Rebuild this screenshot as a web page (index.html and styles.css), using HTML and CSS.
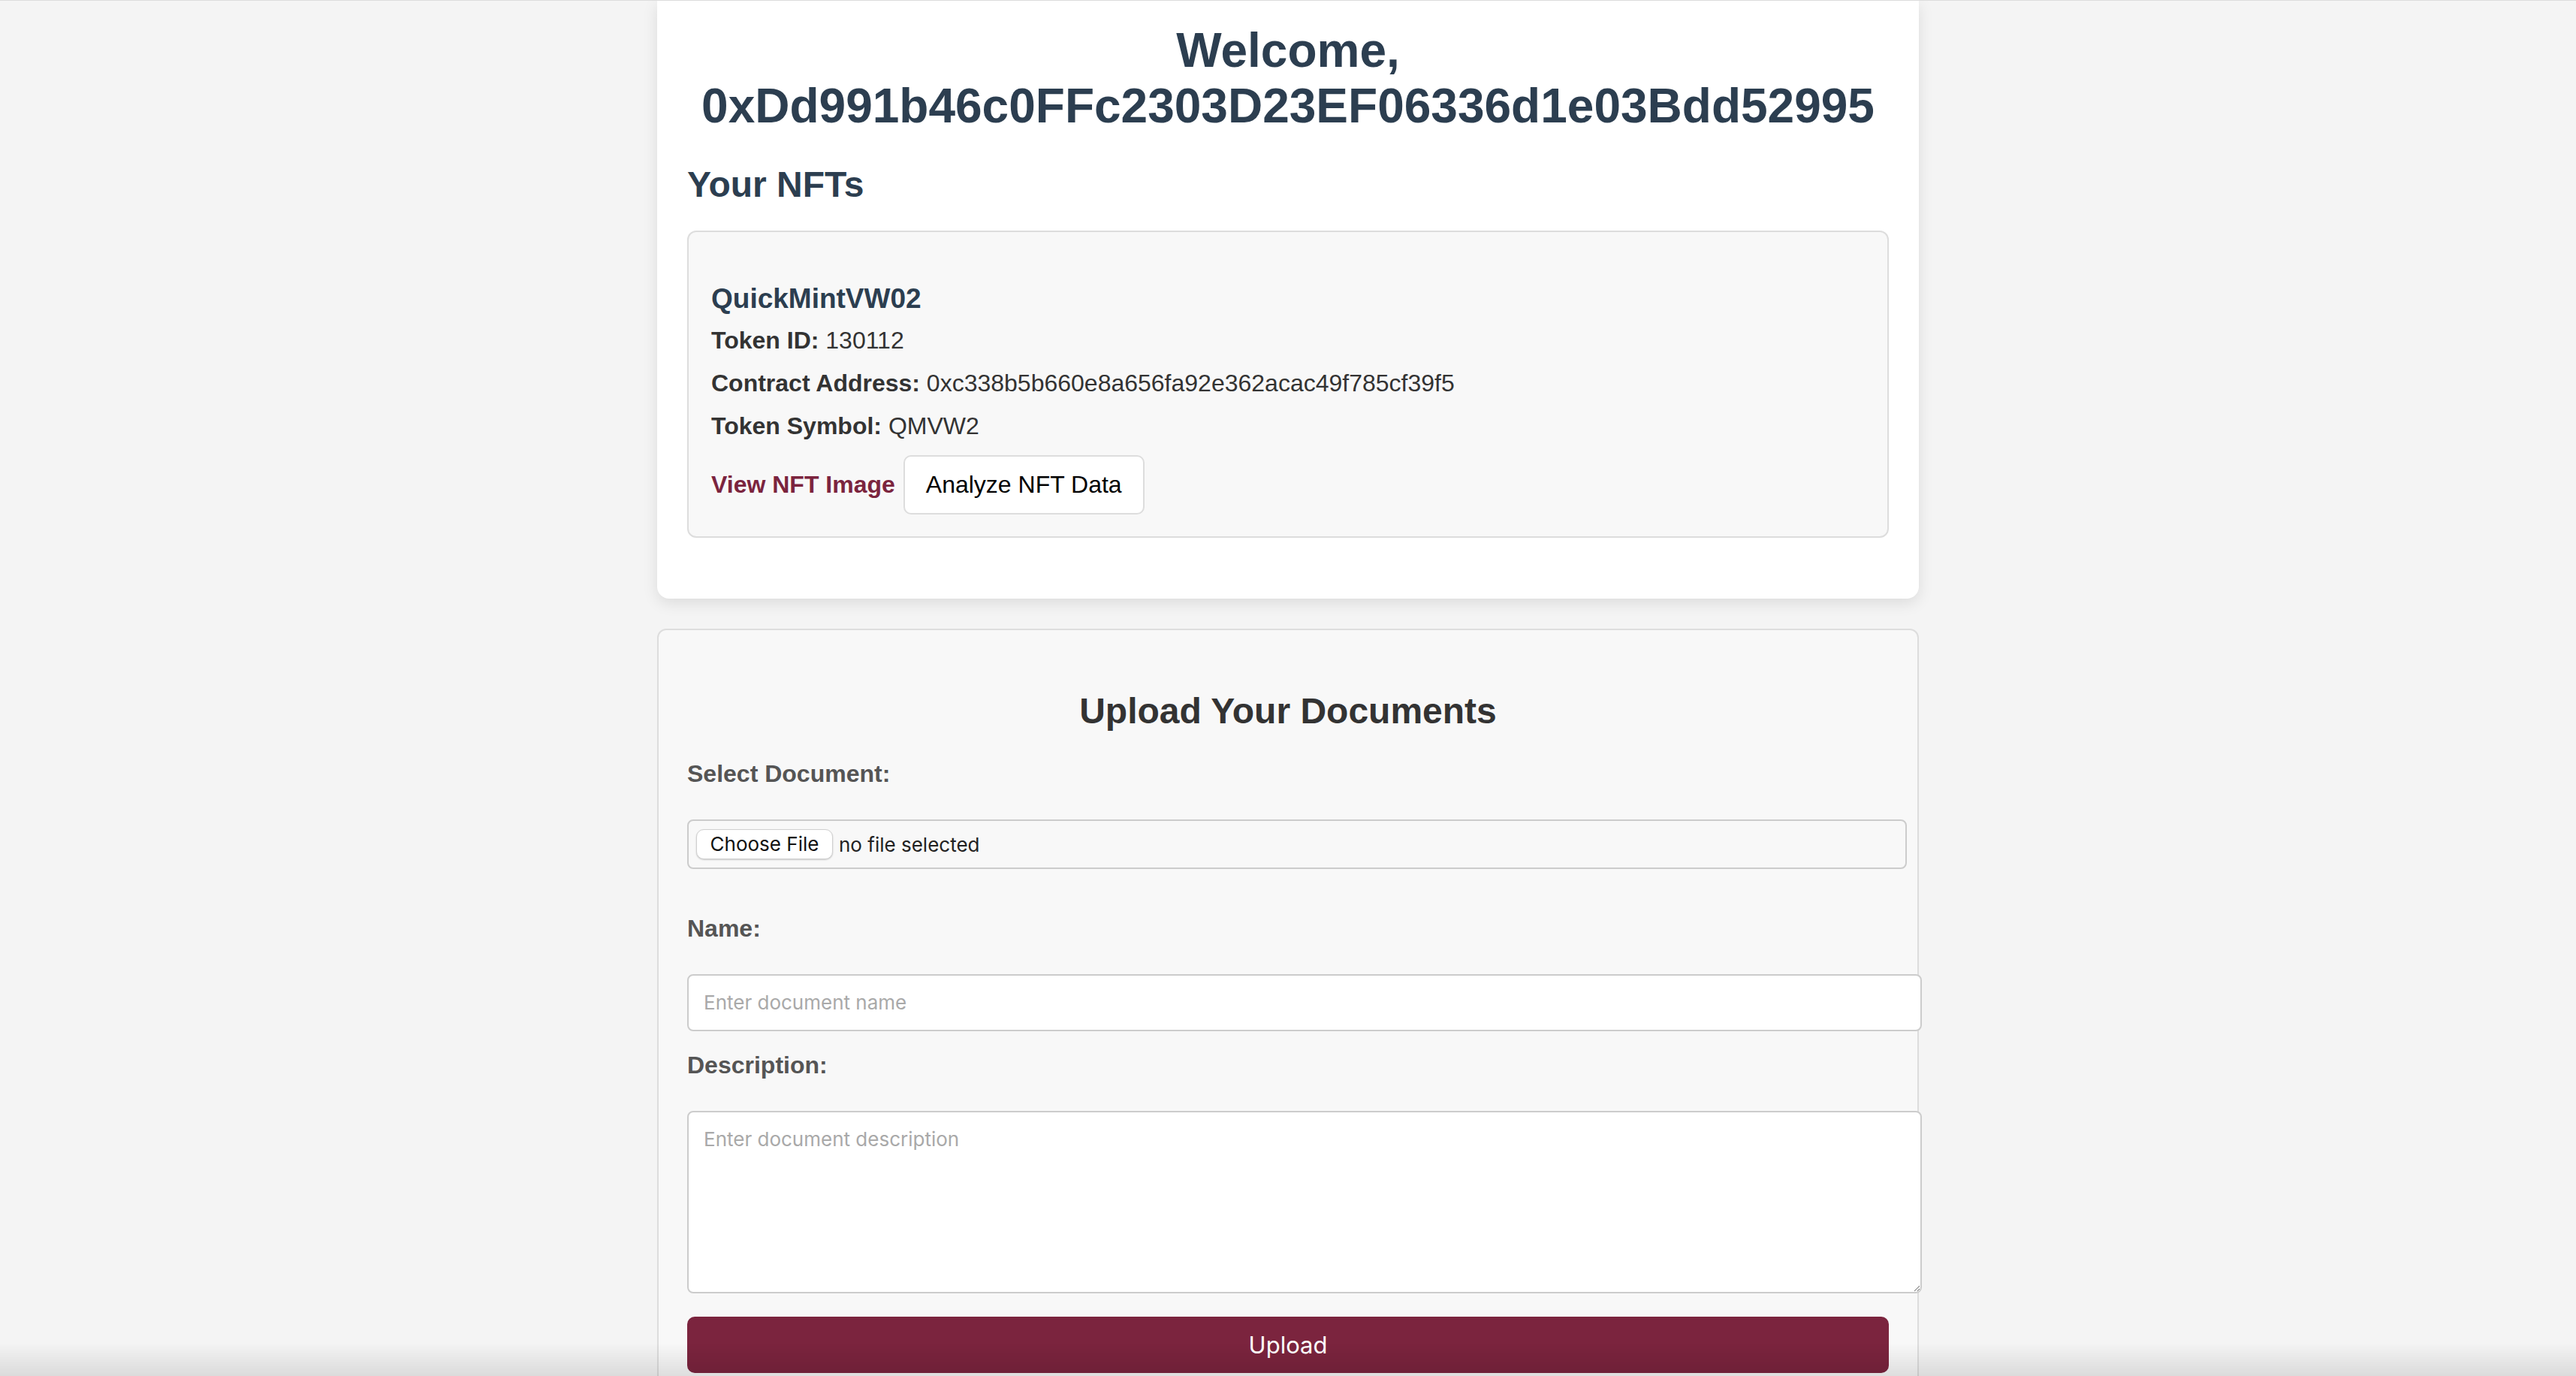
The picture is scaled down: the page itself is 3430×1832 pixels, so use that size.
FILE: index.html
```html
<!DOCTYPE html>
<html lang="en">
<head>
    <meta charset="UTF-8">
    <meta name="viewport" content="width=device-width, initial-scale=1.0">
    <title>Dashboard</title>
    <link rel="stylesheet" href="styles.css">
</head>
<body>
    <div class="container">
        <div class="dashboard">
            <h1>Welcome,<br>0xDd991b46c0FFc2303D23EF06336d1e03Bdd52995</h1>
            <h2>Your NFTs</h2>
            <div class="nft-card">
                <h3>QuickMintVW02</h3>
                <p><strong>Token ID:</strong> 130112</p>
                <p><strong>Contract Address:</strong> 0xc338b5b660e8a656fa92e362acac49f785cf39f5</p>
                <p><strong>Token Symbol:</strong> QMVW2</p>
                <div class="actions">
                    <a class="view-link" href="#">View NFT Image</a>
                    <button class="analyze-btn">Analyze NFT Data</button>
                </div>
            </div>
        </div>

        <div class="upload-card">
            <h2>Upload Your Documents</h2>
            <form>
                <label for="document">Select Document:</label>
                <label class="file-box">
                    <span class="choose-btn">Choose File</span>
                    <span class="file-name">no file selected</span>
                    <input type="file" id="document" class="file-hidden">
                </label>

                <label for="name">Name:</label>
                <input type="text" id="name" class="text-input" placeholder="Enter document name">

                <label for="description">Description:</label>
                <textarea id="description" class="text-area" placeholder="Enter document description"></textarea>

                <button type="submit" class="upload-btn">Upload</button>
            </form>
        </div>
    </div>
    <div class="window-shade"></div>
</body>
</html>
```

FILE: styles.css
```css
body {
    margin: 0;
    background-color: #f4f4f4;
    border-top: 1px solid #dcdcdc;
    font-family: "Liberation Sans", Arial, sans-serif;
    color: #333;
}
.container {
    width: 1680px;
    margin: 0 auto;
}
.dashboard {
    background-color: #fff;
    padding: 29px 40px 40px;
    border-radius: 0 0 16px 16px;
    box-shadow: 0 6px 20px rgba(0, 0, 0, 0.1);
}
.dashboard h1 {
    margin: 0;
    font-size: 64px;
    line-height: 74px;
    text-align: center;
    color: #2c3e50;
}
.dashboard h2 {
    margin: 40px 0 34px;
    font-size: 48px;
    line-height: 55px;
    color: #2c3e50;
}
.nft-card {
    background-color: #f8f8f8;
    border: 2px solid #ddd;
    border-radius: 12px;
    padding: 30px 30px 29px;
    margin-bottom: 41px;
}
.nft-card h3 {
    margin: 37px 0 16px;
    font-size: 37px;
    line-height: 43px;
    color: #2c3e50;
}
.nft-card p {
    margin: 0 0 20px;
    font-size: 32px;
    line-height: 37px;
}
.actions {
    display: flex;
    align-items: center;
    gap: 11px;
}
.view-link {
    color: #7b243e;
    font-weight: bold;
    font-size: 32px;
    line-height: 37px;
    text-decoration: none;
}
.analyze-btn {
    background-color: #fff;
    border: 2px solid #ddd;
    border-radius: 10px;
    padding: 19px 28px;
    font-family: "Liberation Sans", Arial, sans-serif;
    font-size: 32px;
    line-height: 37px;
    color: #000;
    cursor: pointer;
}
.upload-card {
    margin-top: 40px;
    background-color: #f8f8f8;
    border: 2px solid #ddd;
    border-radius: 12px;
    padding: 40px 38px 40px;
}
.upload-card h2 {
    margin: 40px 0 38px;
    font-size: 48px;
    line-height: 55px;
    text-align: center;
    color: #333;
}
.upload-card label {
    display: block;
    margin-bottom: 42px;
    font-size: 32px;
    line-height: 37px;
    font-weight: bold;
    color: #555;
}
.upload-card .file-box {
    display: flex;
    align-items: center;
    gap: 8px;
    width: 100%;
    margin-bottom: 61px;
    padding: 11px 10px;
    border: 2px solid #ccc;
    border-radius: 8px;
    background-color: #f8f8f8;
    font-family: Inter, "Noto Sans", sans-serif;
    font-size: 26px;
    font-weight: normal;
    color: #222;
    cursor: pointer;
}
.choose-btn {
    box-sizing: border-box;
    width: 182px;
    height: 40px;
    line-height: 38px;
    text-align: center;
    background-color: #fff;
    border: 1px solid #d0d0d0;
    border-radius: 10px;
    box-shadow: 0 1px 2px rgba(0, 0, 0, 0.2);
    color: #111;
}
.file-hidden {
    display: none;
}
.text-input, .text-area {
    display: block;
    width: 100%;
    padding: 20px;
    border: 2px solid #ccc;
    border-radius: 8px;
    background-color: #fff;
    font-family: Inter, "Noto Sans", sans-serif;
    font-size: 26px;
    line-height: 32px;
    color: #222;
}
.text-input {
    margin-bottom: 27px;
}
.text-area {
    height: 199px;
    margin: 0 0 31px;
    resize: vertical;
}
.text-input::placeholder, .text-area::placeholder {
    color: #a9a9a9;
}
.upload-btn {
    display: block;
    width: 100%;
    height: 75px;
    background-color: #7b243e;
    color: #fff;
    border: none;
    border-radius: 10px;
    font-family: Inter, "Noto Sans", sans-serif;
    font-size: 31px;
    cursor: pointer;
}
.window-shade {
    position: fixed;
    left: 0;
    right: 0;
    bottom: 0;
    height: 44px;
    background: linear-gradient(rgba(0, 0, 0, 0), rgba(0, 0, 0, 0.1));
    pointer-events: none;
}
```
